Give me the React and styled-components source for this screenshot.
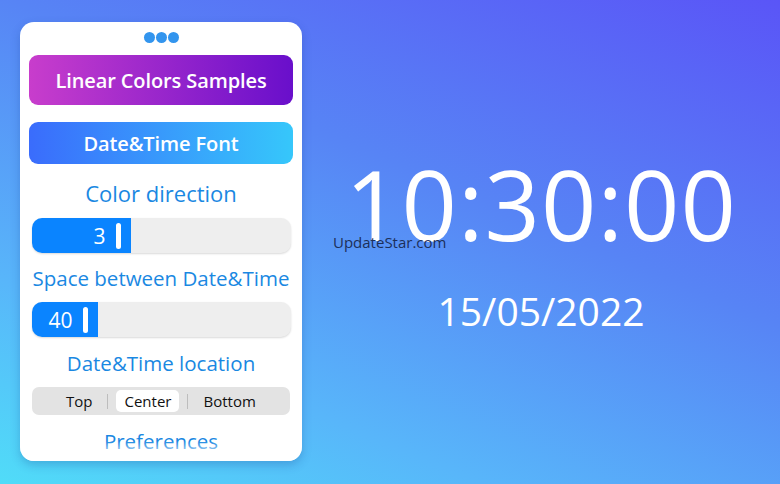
import React from 'react';
import styled, { createGlobalStyle } from 'styled-components';

const GlobalStyle = createGlobalStyle`
  html, body {
    margin: 0;
    padding: 0;
  }
  body {
    font-family: "Open Sans", "Noto Sans", sans-serif;
  }
`;

const Screen = styled.div`
  position: relative;
  display: flex;
  width: 780px;
  height: 484px;
  overflow: hidden;
  background: linear-gradient(203deg, #5a55f7 0%, #5784f5 40%, #58b6fa 75%, #50dcf8 100%);
`;

const Panel = styled.aside`
  position: relative;
  display: flex;
  flex-direction: column;
  align-items: center;
  width: 282px;
  height: 439px;
  margin: 22px 0 0 20px;
  padding: 10px 9px 0;
  box-sizing: border-box;
  background: #ffffff;
  border-radius: 14px;
  box-shadow: 0 4px 10px rgba(20, 60, 140, 0.25);
  overflow: hidden;
`;

const Dots = styled.div`
  display: flex;
  margin-bottom: 12px;

  > span {
    width: 11px;
    height: 11px;
    margin: 0 0.5px;
    border-radius: 50%;
    background: #3395ee;
  }
`;

const GradientButton = styled.button`
  flex-shrink: 0;
  width: 264px;
  height: ${(p) => p.h}px;
  margin-bottom: ${(p) => p.mb}px;
  border: none;
  border-radius: 9px;
  background: linear-gradient(to right, ${(p) => p.from}, ${(p) => p.to});
  color: #ffffff;
  font-family: "Open Sans", sans-serif;
  font-size: 20px;
  font-weight: 600;
  letter-spacing: -0.1px;
  cursor: pointer;
`;

const Label = styled.div`
  flex-shrink: 0;
  color: #1a88e2;
  font-size: ${(p) => p.size || 20.5}px;
  line-height: 20px;
  height: 20px;
  margin: ${(p) => p.m};
  white-space: nowrap;
`;

const Track = styled.div`
  flex-shrink: 0;
  position: relative;
  display: flex;
  width: 259px;
  height: 35px;
  border-radius: 10px;
  background: #eeeeee;
  box-shadow: 0 1px 2px rgba(0, 0, 0, 0.15);
  overflow: hidden;
`;

const Fill = styled.div`
  display: flex;
  align-items: center;
  justify-content: flex-end;
  gap: 10px;
  height: 100%;
  padding-right: 10px;
  box-sizing: border-box;
  background: #0a84ff;
  color: #ffffff;
  font-size: 21px;
`;

const Thumb = styled.span`
  width: 5px;
  height: 26px;
  border-radius: 3px;
  background: #ffffff;
`;

const Segmented = styled.div`
  flex-shrink: 0;
  display: flex;
  align-items: center;
  width: 258px;
  height: 28px;
  padding-left: 34px;
  box-sizing: border-box;
  border-radius: 7px;
  background: #e3e3e3;
`;

const Segment = styled.div`
  display: flex;
  align-items: center;
  justify-content: center;
  width: ${(p) => (p.w ? `${p.w}px` : 'auto')};
  height: 22px;
  border-radius: 5px;
  background: ${(p) => (p.active ? '#ffffff' : 'transparent')};
  color: #111111;
  font-size: 15px;
`;

const Divider = styled.span`
  width: 1px;
  height: 15px;
  margin: ${(p) => p.m};
  background: #bdbdbd;
`;

const FadeOut = styled.div`
  position: absolute;
  left: 0;
  right: 0;
  bottom: 0;
  height: 20px;
  background: linear-gradient(to bottom, rgba(255, 255, 255, 0), #ffffff 90%);
`;

const ClockArea = styled.main`
  position: relative;
  flex: 1;
  display: flex;
  flex-direction: column;
  align-items: center;
  justify-content: center;
  color: #ffffff;
`;

const Time = styled.div`
  font-size: 97px;
  font-weight: 400;
  line-height: 1;
  letter-spacing: 1px;
`;

const DateText = styled.div`
  font-size: 39px;
  line-height: 1;
  margin-top: 39px;
`;

const Watermark = styled.div`
  position: absolute;
  left: 333px;
  top: 232px;
  color: #1c2f5a;
  font-family: "Open Sans", sans-serif;
  font-size: 15px;
`;

export default function App() {
  return (
    <>
      <GlobalStyle />
      <Screen>
        <Panel>
          <Dots>
            <span />
            <span />
            <span />
          </Dots>
          <GradientButton h={50} mb={17} from="#c83dcc" to="#690fcb">
            Linear Colors Samples
          </GradientButton>
          <GradientButton h={42} mb={0} from="#3a6cfc" to="#36c7fb">
            Date&amp;Time Font
          </GradientButton>
          <Label size={22} m="19px 0 15px">Color direction</Label>
          <Track>
            <Fill style={{ width: 99 }}>
              3
              <Thumb />
            </Fill>
          </Track>
          <Label m="15px 0 14px">Space between Date&amp;Time</Label>
          <Track>
            <Fill style={{ width: 66 }}>
              40
              <Thumb />
            </Fill>
          </Track>
          <Label m="16px 0 14px">Date&amp;Time location</Label>
          <Segmented>
            <Segment>Top</Segment>
            <Divider m="0 8px 0 15px" />
            <Segment w={63} active>Center</Segment>
            <Divider m="0 15px 0 8px" />
            <Segment>Bottom</Segment>
          </Segmented>
          <Label m="16px 0 0">Preferences</Label>
          <FadeOut />
        </Panel>
        <ClockArea>
          <Time>10:30:00</Time>
          <DateText>15/05/2022</DateText>
        </ClockArea>
        <Watermark>UpdateStar.com</Watermark>
      </Screen>
    </>
  );
}
